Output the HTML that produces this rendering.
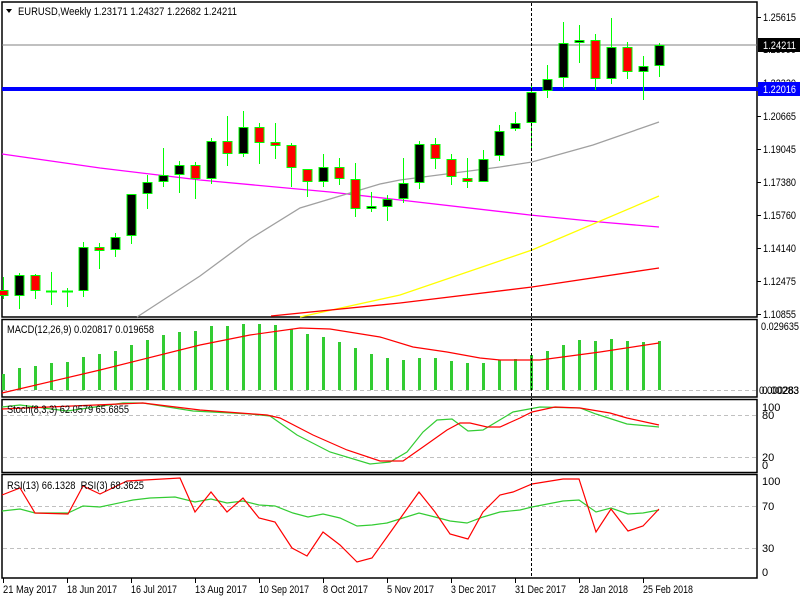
<!DOCTYPE html>
<html><head><meta charset="utf-8"><style>
html,body{margin:0;padding:0;background:#fff;width:800px;height:600px;overflow:hidden}
svg{display:block;font-family:"Liberation Sans",sans-serif;font-size:10px}
</style></head><body>
<svg width="800" height="600" viewBox="0 0 800 600" xmlns="http://www.w3.org/2000/svg">
<rect width="800" height="600" fill="#fff"/>
<g fill="none" stroke="#000" stroke-width="1.5">
<rect x="2" y="2" width="755" height="315"/>
<rect x="2" y="319.5" width="755" height="77.5"/>
<rect x="2" y="399.5" width="755" height="73"/>
<rect x="2" y="474.5" width="755" height="103.5"/>
</g>
<g stroke="#c0c0c0" stroke-dasharray="4,3" stroke-width="1">
<line x1="3" y1="390.5" x2="756" y2="390.5"/>
<line x1="3" y1="415.5" x2="756" y2="415.5"/>
<line x1="3" y1="457.5" x2="756" y2="457.5"/>
<line x1="3" y1="506.5" x2="756" y2="506.5"/>
<line x1="3" y1="548.5" x2="756" y2="548.5"/>
</g>
<g fill="none" stroke-width="1.3">
<polyline stroke="#ff00ff" points="2,154 100,168 200,180 330,192 400,200 530,215 600,222 659,227"/>
<polyline stroke="#a0a0a0" points="137,317 200,276 250,239 300,208 350,193 380,184 400,180 500,167 532,162 593,145 659,122"/>
<polyline stroke="#ffff00" points="300,317 400,295 532,250 659,196"/>
<polyline stroke="#ff0000" points="271,316 400,303 532,287 659,268"/>
</g>
<line x1="2" y1="45" x2="757" y2="45" stroke="#808080" stroke-width="1"/>
<line x1="2" y1="89" x2="800" y2="89" stroke="#0000ff" stroke-width="4"/>
<g stroke="#00ff00" stroke-width="1">
<line x1="3.5" y1="277" x2="3.5" y2="299"/><rect x="-1" y="290.5" width="9" height="5" fill="#f00"/>
<line x1="19.5" y1="273" x2="19.5" y2="309"/><rect x="15" y="275.5" width="9" height="20" fill="#000"/>
<line x1="35.5" y1="274" x2="35.5" y2="299"/><rect x="31" y="275.5" width="9" height="15" fill="#f00"/>
<line x1="51.5" y1="272" x2="51.5" y2="305"/><line x1="46" y1="291.5" x2="57" y2="291.5" stroke-width="2"/>
<line x1="67.5" y1="288" x2="67.5" y2="307"/><line x1="62" y1="291.5" x2="73" y2="291.5" stroke-width="2"/>
<line x1="83.5" y1="242" x2="83.5" y2="297"/><rect x="79" y="247.5" width="9" height="43" fill="#000"/>
<line x1="99.5" y1="243" x2="99.5" y2="269"/><rect x="95" y="247.5" width="9" height="3" fill="#f00"/>
<line x1="115.5" y1="233" x2="115.5" y2="257"/><rect x="111" y="237.5" width="9" height="12" fill="#000"/>
<line x1="131.5" y1="194" x2="131.5" y2="244"/><rect x="127" y="194.5" width="9" height="41" fill="#000"/>
<line x1="147.5" y1="175" x2="147.5" y2="209"/><rect x="143" y="182.5" width="9" height="11" fill="#000"/>
<line x1="163.5" y1="148" x2="163.5" y2="187"/><rect x="159" y="175.5" width="9" height="6" fill="#000"/>
<line x1="179.5" y1="161" x2="179.5" y2="193"/><rect x="175" y="165.5" width="9" height="9" fill="#000"/>
<line x1="195.5" y1="162" x2="195.5" y2="199"/><rect x="191" y="165.5" width="9" height="13" fill="#f00"/>
<line x1="211.5" y1="138" x2="211.5" y2="184"/><rect x="207" y="141.5" width="9" height="37" fill="#000"/>
<line x1="227.5" y1="116" x2="227.5" y2="166"/><rect x="223" y="141.5" width="9" height="12" fill="#f00"/>
<line x1="243.5" y1="111" x2="243.5" y2="157"/><rect x="239" y="127.5" width="9" height="26" fill="#000"/>
<line x1="259.5" y1="123" x2="259.5" y2="164"/><rect x="255" y="127.5" width="9" height="15" fill="#f00"/>
<line x1="275.5" y1="123" x2="275.5" y2="159"/><rect x="271" y="142.5" width="9" height="3" fill="#f00"/>
<line x1="291.5" y1="143" x2="291.5" y2="187"/><rect x="287" y="145.5" width="9" height="22" fill="#f00"/>
<line x1="307.5" y1="169" x2="307.5" y2="197"/><rect x="303" y="169.5" width="9" height="12" fill="#f00"/>
<line x1="323.5" y1="154" x2="323.5" y2="187"/><rect x="319" y="167.5" width="9" height="14" fill="#000"/>
<line x1="339.5" y1="158" x2="339.5" y2="185"/><rect x="335" y="167.5" width="9" height="11" fill="#f00"/>
<line x1="355.5" y1="163" x2="355.5" y2="217"/><rect x="351" y="179.5" width="9" height="29" fill="#f00"/>
<line x1="371.5" y1="192" x2="371.5" y2="212"/><rect x="367" y="206.5" width="9" height="2" fill="#000"/>
<line x1="387.5" y1="195" x2="387.5" y2="221"/><rect x="383" y="199.5" width="9" height="7" fill="#000"/>
<line x1="403.5" y1="158" x2="403.5" y2="203"/><rect x="399" y="183.5" width="9" height="15" fill="#000"/>
<line x1="419.5" y1="141" x2="419.5" y2="189"/><rect x="415" y="144.5" width="9" height="38" fill="#000"/>
<line x1="435.5" y1="138" x2="435.5" y2="169"/><rect x="431" y="144.5" width="9" height="14" fill="#f00"/>
<line x1="451.5" y1="154" x2="451.5" y2="185"/><rect x="447" y="159.5" width="9" height="17" fill="#f00"/>
<line x1="467.5" y1="158" x2="467.5" y2="188"/><rect x="463" y="178.5" width="9" height="3" fill="#f00"/>
<line x1="483.5" y1="150" x2="483.5" y2="182"/><rect x="479" y="159.5" width="9" height="22" fill="#000"/>
<line x1="499.5" y1="125" x2="499.5" y2="161"/><rect x="495" y="131.5" width="9" height="24" fill="#000"/>
<line x1="515.5" y1="112" x2="515.5" y2="131"/><rect x="511" y="123.5" width="9" height="5" fill="#000"/>
<line x1="531.5" y1="86" x2="531.5" y2="148"/><rect x="527" y="92.5" width="9" height="30" fill="#000"/>
<line x1="547.5" y1="65" x2="547.5" y2="98"/><rect x="543" y="79.5" width="9" height="11" fill="#000"/>
<line x1="563.5" y1="22" x2="563.5" y2="88"/><rect x="559" y="43.5" width="9" height="34" fill="#000"/>
<line x1="579.5" y1="25" x2="579.5" y2="63"/><rect x="575" y="40.5" width="9" height="2" fill="#000"/>
<line x1="595.5" y1="34" x2="595.5" y2="90"/><rect x="591" y="40.5" width="9" height="38" fill="#f00"/>
<line x1="611.5" y1="18" x2="611.5" y2="84"/><rect x="607" y="47.5" width="9" height="31" fill="#000"/>
<line x1="627.5" y1="42" x2="627.5" y2="79"/><rect x="623" y="47.5" width="9" height="24" fill="#f00"/>
<line x1="643.5" y1="56" x2="643.5" y2="100"/><rect x="639" y="66.5" width="9" height="5" fill="#000"/>
<line x1="659.5" y1="43" x2="659.5" y2="77"/><rect x="655" y="45.5" width="9" height="20" fill="#000"/>
</g>
<g fill="#33cc33">
<rect x="2" y="374" width="3" height="16"/><rect x="18" y="368" width="3" height="22"/><rect x="34" y="366" width="3" height="24"/><rect x="50" y="363" width="3" height="27"/><rect x="66" y="362" width="3" height="28"/><rect x="82" y="357" width="3" height="33"/><rect x="98" y="354" width="3" height="36"/><rect x="114" y="351" width="3" height="39"/><rect x="130" y="345" width="3" height="45"/><rect x="146" y="340" width="3" height="50"/><rect x="162" y="335" width="3" height="55"/><rect x="178" y="332" width="3" height="58"/><rect x="194" y="331" width="3" height="59"/><rect x="210" y="326" width="3" height="64"/><rect x="226" y="326" width="3" height="64"/><rect x="242" y="324" width="3" height="66"/><rect x="258" y="324" width="3" height="66"/><rect x="274" y="325" width="3" height="65"/><rect x="290" y="329" width="3" height="61"/><rect x="306" y="334" width="3" height="56"/><rect x="322" y="337" width="3" height="53"/><rect x="338" y="342" width="3" height="48"/><rect x="354" y="348" width="3" height="42"/><rect x="370" y="354" width="3" height="36"/><rect x="386" y="358" width="3" height="32"/><rect x="402" y="360" width="3" height="30"/><rect x="418" y="358" width="3" height="32"/><rect x="434" y="358" width="3" height="32"/><rect x="450" y="361" width="3" height="29"/><rect x="466" y="363" width="3" height="27"/><rect x="482" y="363" width="3" height="27"/><rect x="498" y="360" width="3" height="30"/><rect x="514" y="359" width="3" height="31"/><rect x="530" y="355" width="3" height="35"/><rect x="546" y="351" width="3" height="39"/><rect x="562" y="345" width="3" height="45"/><rect x="578" y="340" width="3" height="50"/><rect x="594" y="341" width="3" height="49"/><rect x="610" y="339" width="3" height="51"/><rect x="626" y="341" width="3" height="49"/><rect x="642" y="342" width="3" height="48"/><rect x="658" y="341" width="3" height="49"/>
</g>
<g fill="none" stroke-width="1.2">
<polyline stroke="#f00" points="2,393 100,370 200,345 250,335 300,328 330,329 380,337 413,347 447,352 480,358 500,360 540,360 600,352 659,343"/>
<polyline stroke="#33cc33" points="2,407 20,405 67,411 123,403 143,403 193,411 250,414 270,416 280,423 297,435 330,452 370,464 390,462 407,452 423,432 437,420 452,419 468,431 483,430 513,412 540,407 580,408 596,414 627,424 659,427"/>
<polyline stroke="#f00" points="2,409 143,403 200,410 267,415 280,418 313,435 347,450 380,461 403,461 423,447 447,430 460,423 470,423 487,427 500,427 520,418 532,412 555,407 580,408 610,413 627,418 659,425"/>
<polyline stroke="#33cc33" points="2,511 20,509 35,513 68,513 83,506 100,507 133,500 150,498 175,497 195,502 211,499 227,503 243,501 259,505 275,506 293,513 308,517 323,514 340,518 357,526 372,525 387,523 419,513 435,517 450,521 467,523 483,517 500,512 520,510 532,507 563,501 579,500 596,512 611,508 628,514 643,513 659,510"/>
<polyline stroke="#f00" points="2,495 20,488 35,513 68,514 83,486 100,494 127,481 180,478 195,512 211,492 227,512 243,498 259,518 275,522 292,548 307,556 323,532 340,545 357,562 372,558 387,537 419,492 435,512 450,534 468,539 483,512 500,495 513,492 532,484 563,479 579,479 596,532 611,509 628,531 643,526 659,509"/>
</g>
<line x1="531.5" y1="3" x2="531.5" y2="578" stroke="#000" stroke-width="1" stroke-dasharray="3,2"/>
<g fill="#000" font-size="11">
<polygon points="6,9 12,9 9,13"/>
<text x="18" y="15" textLength="219" lengthAdjust="spacingAndGlyphs">EURUSD,Weekly  1.23171 1.24327 1.22682 1.24211</text>
<text x="7" y="333" textLength="147" lengthAdjust="spacingAndGlyphs">MACD(12,26,9) 0.020817 0.019658</text>
<text x="7" y="413" textLength="122" lengthAdjust="spacingAndGlyphs">Stoch(8,3,3) 62.0579 65.6855</text>
<text x="7" y="489" textLength="137" lengthAdjust="spacingAndGlyphs" xml:space="preserve">RSI(13) 66.1328  RSI(3) 68.3625</text>
</g>
<g stroke="#000" stroke-width="1">
<line x1="757" y1="17.5" x2="761" y2="17.5"/><line x1="757" y1="116.5" x2="761" y2="116.5"/><line x1="757" y1="149.5" x2="761" y2="149.5"/><line x1="757" y1="182.5" x2="761" y2="182.5"/><line x1="757" y1="215.5" x2="761" y2="215.5"/><line x1="757" y1="248.5" x2="761" y2="248.5"/><line x1="757" y1="281.5" x2="761" y2="281.5"/><line x1="757" y1="314.5" x2="761" y2="314.5"/>
</g>
<g fill="#000" font-size="11">
<text x="763" y="21" textLength="33" lengthAdjust="spacingAndGlyphs">1.25615</text>
<text x="763" y="53" textLength="33" lengthAdjust="spacingAndGlyphs">1.23990</text>
<text x="763" y="87" textLength="33" lengthAdjust="spacingAndGlyphs">1.22330</text>
<text x="763" y="120" textLength="33" lengthAdjust="spacingAndGlyphs">1.20665</text>
<text x="763" y="153" textLength="33" lengthAdjust="spacingAndGlyphs">1.19045</text>
<text x="763" y="186" textLength="33" lengthAdjust="spacingAndGlyphs">1.17380</text>
<text x="763" y="219" textLength="33" lengthAdjust="spacingAndGlyphs">1.15760</text>
<text x="763" y="252" textLength="33" lengthAdjust="spacingAndGlyphs">1.14140</text>
<text x="763" y="285" textLength="33" lengthAdjust="spacingAndGlyphs">1.12475</text>
<text x="763" y="318" textLength="33" lengthAdjust="spacingAndGlyphs">1.10855</text>
<text x="761" y="330" textLength="38" lengthAdjust="spacingAndGlyphs">0.029635</text>
<text x="759" y="394" textLength="40" lengthAdjust="spacingAndGlyphs">0.000283</text>
<text x="762" y="394" textLength="37" lengthAdjust="spacingAndGlyphs">0.00283</text>
<text x="762" y="411">100</text><text x="762" y="419">80</text><text x="762" y="461">20</text><text x="762" y="469">0</text>
<text x="762" y="485">100</text><text x="762" y="510">70</text><text x="762" y="552">30</text><text x="762" y="576">0</text>
</g>
<rect x="758" y="38" width="42" height="14" fill="#000"/>
<text x="763" y="49" fill="#fff" font-size="11" textLength="33" lengthAdjust="spacingAndGlyphs">1.24211</text>
<rect x="758" y="82" width="42" height="14" fill="#0000ff"/>
<text x="763" y="93" fill="#fff" font-size="11" textLength="33" lengthAdjust="spacingAndGlyphs">1.22016</text>
<g stroke="#000"><line x1="3.5" y1="578" x2="3.5" y2="583"/><line x1="67.5" y1="578" x2="67.5" y2="583"/><line x1="131.5" y1="578" x2="131.5" y2="583"/><line x1="195.5" y1="578" x2="195.5" y2="583"/><line x1="259.5" y1="578" x2="259.5" y2="583"/><line x1="323.5" y1="578" x2="323.5" y2="583"/><line x1="387.5" y1="578" x2="387.5" y2="583"/><line x1="451.5" y1="578" x2="451.5" y2="583"/><line x1="515.5" y1="578" x2="515.5" y2="583"/><line x1="579.5" y1="578" x2="579.5" y2="583"/><line x1="643.5" y1="578" x2="643.5" y2="583"/></g>
<g fill="#000" font-size="11">
<text x="3" y="593" textLength="54" lengthAdjust="spacingAndGlyphs">21 May 2017</text>
<text x="67" y="593" textLength="50" lengthAdjust="spacingAndGlyphs">18 Jun 2017</text>
<text x="131" y="593" textLength="46" lengthAdjust="spacingAndGlyphs">16 Jul 2017</text>
<text x="195" y="593" textLength="52" lengthAdjust="spacingAndGlyphs">13 Aug 2017</text>
<text x="259" y="593" textLength="50" lengthAdjust="spacingAndGlyphs">10 Sep 2017</text>
<text x="323" y="593" textLength="45" lengthAdjust="spacingAndGlyphs">8 Oct 2017</text>
<text x="387" y="593" textLength="47" lengthAdjust="spacingAndGlyphs">5 Nov 2017</text>
<text x="451" y="593" textLength="45" lengthAdjust="spacingAndGlyphs">3 Dec 2017</text>
<text x="515" y="593" textLength="51" lengthAdjust="spacingAndGlyphs">31 Dec 2017</text>
<text x="579" y="593" textLength="49" lengthAdjust="spacingAndGlyphs">28 Jan 2018</text>
<text x="643" y="593" textLength="50" lengthAdjust="spacingAndGlyphs">25 Feb 2018</text>
</g>
</svg>
</body></html>
